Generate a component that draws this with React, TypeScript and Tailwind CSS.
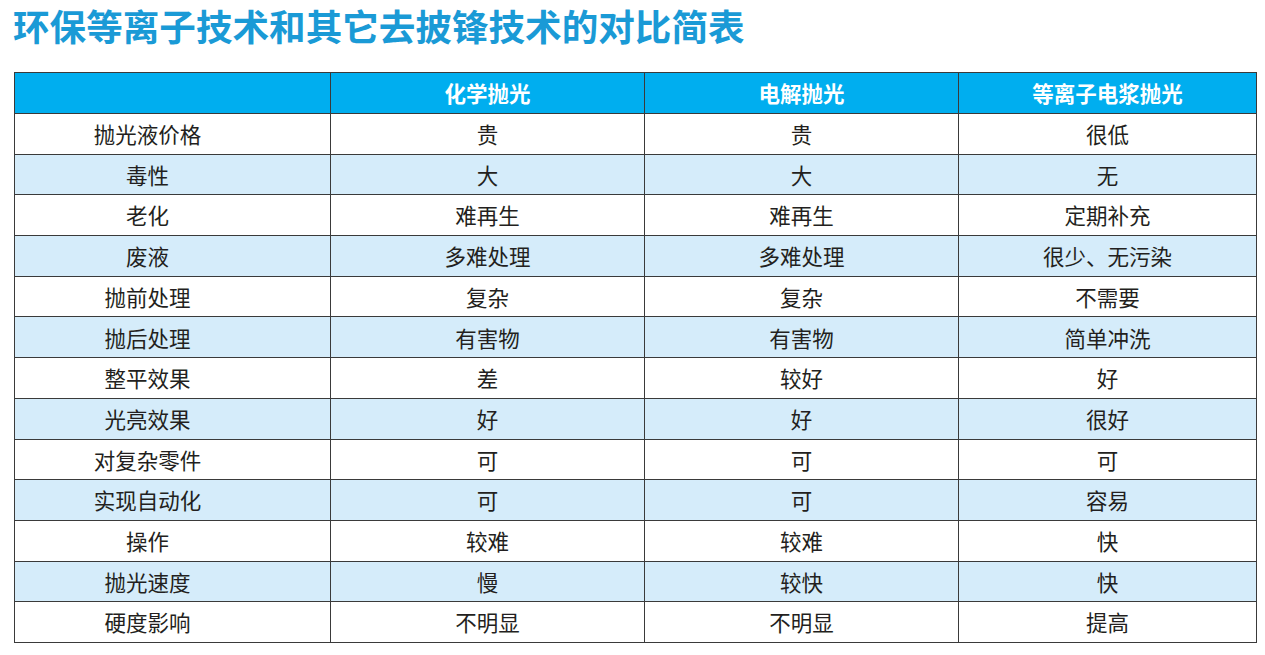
import React from 'react';

const rows: [string, string, string, string][] = [
  ['抛光液价格', '贵', '贵', '很低'],
  ['毒性', '大', '大', '无'],
  ['老化', '难再生', '难再生', '定期补充'],
  ['废液', '多难处理', '多难处理', '很少、无污染'],
  ['抛前处理', '复杂', '复杂', '不需要'],
  ['抛后处理', '有害物', '有害物', '简单冲洗'],
  ['整平效果', '差', '较好', '好'],
  ['光亮效果', '好', '好', '很好'],
  ['对复杂零件', '可', '可', '可'],
  ['实现自动化', '可', '可', '容易'],
  ['操作', '较难', '较难', '快'],
  ['抛光速度', '慢', '较快', '快'],
  ['硬度影响', '不明显', '不明显', '提高'],
];

export default function App() {
  return (
    <div
      className="w-[1265px] h-[655px] bg-white overflow-hidden"
      style={{ fontFamily: '"Noto Sans CJK SC", "Noto Sans", sans-serif' }}
    >
      <h1 className="pl-[13px] pt-[6px] h-[72px] text-[36.6px] leading-[40px] font-bold text-[#1a9ad6] whitespace-nowrap">
        环保等离子技术和其它去披锋技术的对比简表
      </h1>
      <table className="ml-[14px] w-[1242px] border-collapse border-[1.5px] border-[#3a3a3a] table-fixed">
        <colgroup>
          <col className="w-[316px]" />
          <col className="w-[314px]" />
          <col className="w-[314px]" />
          <col className="w-[298px]" />
        </colgroup>
        <thead>
          <tr className="h-[41px] bg-[#00aeef]">
            <th className="border-[1.5px] border-[#3a3a3a]"></th>
            <th className="border-[1.5px] border-[#3a3a3a] text-white text-[21.5px] font-bold">化学抛光</th>
            <th className="border-[1.5px] border-[#3a3a3a] text-white text-[21.5px] font-bold">电解抛光</th>
            <th className="border-[1.5px] border-[#3a3a3a] text-white text-[21.5px] font-bold">等离子电浆抛光</th>
          </tr>
        </thead>
        <tbody>
          {rows.map((r, i) => (
            <tr key={i} className={`h-[40.7px] ${i % 2 === 1 ? 'bg-[#d5ecfa]' : 'bg-white'}`}>
              {r.map((c, j) => (
                <td
                  key={j}
                  className={`border-[1.5px] border-[#3a3a3a] text-center text-[21.5px] leading-none text-[#231f20] p-0 ${j === 0 ? 'pr-[50px]' : ''}`}
                >
                  {c}
                </td>
              ))}
            </tr>
          ))}
        </tbody>
      </table>
    </div>
  );
}
